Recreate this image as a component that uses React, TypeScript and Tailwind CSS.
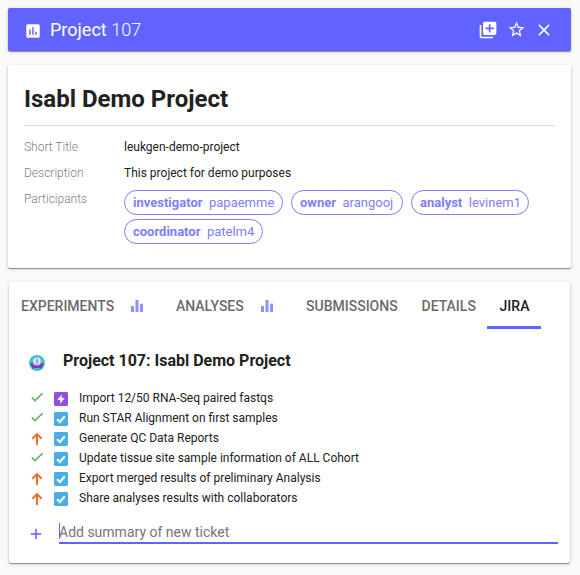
import React from "react";

const paths = {
  assessment: "M19 3H5c-1.1 0-2 .9-2 2v14c0 1.1.9 2 2 2h14c1.1 0 2-.9 2-2V5c0-1.1-.9-2-2-2zM9 17H7v-7h2v7zm4 0h-2V7h2v10zm4 0h-2v-4h2v4z",
  libraryAdd: "M4 6H2v14c0 1.1.9 2 2 2h14v-2H4V6zm16-4H8c-1.1 0-2 .9-2 2v12c0 1.1.9 2 2 2h12c1.1 0 2-.9 2-2V4c0-1.1-.9-2-2-2zm-1 9h-4v4h-2v-4H9V9h4V5h2v4h4v2z",
  star: "M22 9.24l-7.19-.62L12 2 9.19 8.63 2 9.24l5.46 4.73L5.82 21 12 17.27 18.18 21l-1.63-7.03L22 9.24zM12 15.4l-3.76 2.27 1-4.28-3.32-2.88 4.38-.38L12 6.1l1.71 4.04 4.38.38-3.32 2.88 1 4.28L12 15.4z",
  close: "M19 6.41L17.59 5 12 10.59 6.41 5 5 6.41 10.59 12 5 17.59 6.41 19 12 13.41 17.59 19 19 17.59 13.41 12z",
  bars: "M10 20h4V4h-4v16zm-6 0h4v-8H4v8zM16 9v11h4V9h-4z",
  check: "M9 16.17L4.83 12l-1.42 1.41L9 19 21 7l-1.41-1.41z",
  add: "M19 13h-6v6h-2v-6H5v-2h6V5h2v6h6v2z",
};

function Icon({ name, className }: { name: keyof typeof paths; className: string }) {
  return (
    <svg viewBox="0 0 24 24" fill="currentColor" className={`shrink-0 ${className}`}>
      <path d={paths[name]} />
    </svg>
  );
}

function Avatar() {
  return (
    <svg viewBox="0 0 16 16" className="mt-[3px] h-4 w-4 shrink-0">
      <circle cx="8" cy="8" r="8" fill="#47c3c4" />
      <path d="M1.8 7.8h12.4v3l-1.2 1v1.7h-2.4l-.5-.6H5.9l-.5.6H3v-1.7l-1.2-1z" fill="#6f42b5" />
      <circle cx="8" cy="6.6" r="4.4" fill="#a9bfe8" />
      <circle cx="8" cy="6.4" r="3.4" fill="#e8f3ff" />
      <circle cx="8" cy="5.2" r="1" fill="none" stroke="#6889be" strokeWidth=".8" />
      <circle cx="8" cy="7.5" r="1.3" fill="none" stroke="#6889be" strokeWidth=".8" />
      <path d="M2.6 9.2Q8 12 13.4 9.2v1.6l-1 1H3.6l-1-1z" fill="#7541bc" />
    </svg>
  );
}

function Chip({ role, user, width }: { role: string; user: string; width: string }) {
  return (
    <div className={`flex h-[25px] shrink-0 items-center whitespace-pre rounded-full border border-[#807dff] pl-2 text-[13px] text-[#807dff] ${width}`}>
      <span className="font-bold">{role}</span>
      <span className="ml-[6.5px]">{user}</span>
    </div>
  );
}

const tickets = [
  { done: true, epic: true, title: "Import 12/50 RNA-Seq paired fastqs" },
  { done: true, epic: false, title: "Run STAR Alignment on first samples" },
  { done: false, epic: false, title: "Generate QC Data Reports" },
  { done: true, epic: false, title: "Update tissue site sample information of ALL Cohort" },
  { done: false, epic: false, title: "Export merged results of preliminary Analysis" },
  { done: false, epic: false, title: "Share analyses results with collaborators" },
];

function Ticket({ done, epic, title }: (typeof tickets)[number]) {
  return (
    <li className="flex h-5 items-center">
      <span className="flex w-4 justify-center">
        {done ? (
          <Icon name="check" className="-mt-[2px] h-4 w-4 text-[#4caf50]" />
        ) : (
          <svg viewBox="0 0 12 14" className="mt-px h-3.5 w-3 fill-none stroke-[#ed7125] stroke-2">
            <path d="M6 13V2.4M1.3 6.8 6 2.1l4.7 4.7" />
          </svg>
        )}
      </span>
      <svg viewBox="0 0 14 14" className="mt-[2px] ml-[9px] h-3.5 w-3.5">
        <rect width="14" height="14" rx="1.4" fill={epic ? "#904ee2" : "#4bade8"} />
        {epic ? (
          <path d="M7.8 2.4v3.7h2.9L6.2 11.7V8H3.3z" fill="white" />
        ) : (
          <path d="M3.1 7.3 5.9 9.9l4.9-5.6" fill="none" stroke="white" strokeWidth="2.1" />
        )}
      </svg>
      <span className="ml-[11px] text-xs leading-5 whitespace-nowrap">{title}</span>
    </li>
  );
}

const shadow = "shadow-[0_1px_1px_rgba(0,0,0,0.4),0_1px_4px_rgba(0,0,0,0.15)]";

export default function App() {
  return (
    <main className="h-[575px] w-[580px] overflow-hidden bg-[#fafafa] pt-2 font-['Roboto',sans-serif] text-[#212121]">
      <header className={`ml-2 flex h-[43px] w-[563px] items-center rounded-[2px] bg-[#6163ff] text-white ${shadow}`}>
        <Icon name="assessment" className="mt-[3px] ml-4 h-[18px] w-[18px]" />
        <h1 className="ml-2 text-[18px] leading-6">Project <span className="font-light">107</span></h1>
        <div className="ml-auto flex items-center pr-[17px]">
          <Icon name="libraryAdd" className="h-5 w-5" />
          <Icon name="star" className="ml-[9px] h-[19px] w-[19px]" />
          <Icon name="close" className="ml-2 h-5 w-5" />
        </div>
      </header>

      <section className={`mt-[14px] ml-2 h-[203px] w-[563px] rounded-[2px] bg-white px-4 ${shadow}`}>
        <h2 className="h-[61px] border-b border-[#dedede] pt-[18px] text-2xl leading-8 font-bold">Isabl Demo Project</h2>
        <dl className="grid grid-cols-[100px_1fr] pt-2 text-xs">
          <dt className="h-[26px] leading-[26px] font-light text-[#808080]">Short Title</dt>
          <dd className="leading-[26px]">leukgen-demo-project</dd>
          <dt className="h-[26px] leading-[26px] font-light text-[#808080]">Description</dt>
          <dd className="leading-[26px]">This project for demo purposes</dd>
          <dt className="leading-[26px] font-light text-[#808080]">Participants</dt>
          <dd className="flex flex-wrap gap-x-2 gap-y-1 pt-1">
            <Chip role="investigator" user="papaemme" width="w-[159px]" />
            <Chip role="owner" user="arangooj" width="w-[112px]" />
            <Chip role="analyst" user="levinem1" width="w-[118px]" />
            <Chip role="coordinator" user="patelm4" width="w-[139px]" />
          </dd>
        </dl>
      </section>

      <section className={`mt-[14px] ml-[9px] h-[281px] w-[561px] rounded-[2px] bg-white ${shadow}`}>
        <nav className="flex h-[47px] pl-3 text-sm leading-[49px] font-medium whitespace-nowrap text-[#6b6b6b]">
          <div className="flex w-[155px]">
            <span className="w-[107px]">EXPERIMENTS</span>
            <Icon name="bars" className="mt-[15px] h-[18px] w-[18px] text-[#9090ff]" />
          </div>
          <div className="flex w-[130px]">
            <span className="w-[82px]">ANALYSES</span>
            <Icon name="bars" className="mt-[15px] h-[18px] w-[18px] text-[#9090ff]" />
          </div>
          <span className="w-[115px]">SUBMISSIONS</span>
          <span className="w-[66px] pl-[0.5px]">DETAILS</span>
          <span className="w-[54px] border-b-3 border-[#6163ff] pl-px text-center text-[#212121]">JIRA</span>
        </nav>
        <div className="pr-3 pl-5">
          <div className="flex h-[59px] items-start pt-[23px]">
            <Avatar />
            <h3 className="ml-[18px] text-base leading-[18px] font-bold">Project 107: Isabl Demo Project</h3>
          </div>
          <ul>
            {tickets.map((ticket) => <Ticket key={ticket.title} {...ticket} />)}
          </ul>
          <div className="mt-[13px] flex h-[23px] items-center">
            <Icon name="add" className="mt-[3px] -ml-[2px] h-[18px] w-[18px] text-[#6163ff]" />
            <div className="ml-[14px] flex h-[23px] grow items-center border-b-2 border-[#6163ff] text-sm text-[#757575]">
              <span className="mb-px -mr-px h-4 w-px bg-[#6163ff]" />
              <span>Add summary of new ticket</span>
            </div>
          </div>
        </div>
      </section>
    </main>
  );
}
